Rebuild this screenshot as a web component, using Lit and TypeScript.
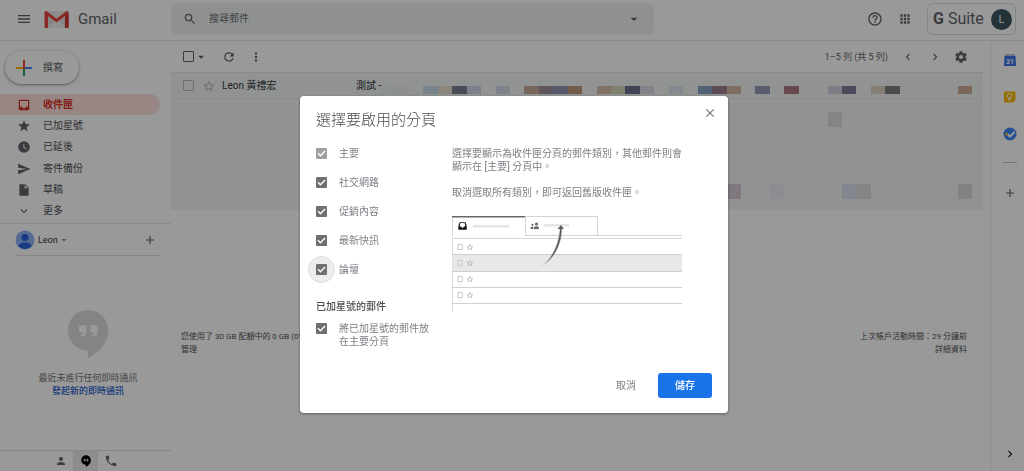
import { LitElement, html, css, svg } from "lit";
import { customElement, property, state } from "lit/decorators.js";
import { classMap } from "lit/directives/class-map.js";
import { styleMap } from "lit/directives/style-map.js";

const ICONS: Record<string, string> = {
  menu: "M3 18h18v-2H3v2zm0-5h18v-2H3v2zm0-7v2h18V6H3z",
  search: "M15.5 14h-.79l-.28-.27A6.47 6.47 0 0 0 16 9.5 6.5 6.5 0 1 0 9.5 16c1.61 0 3.09-.59 4.23-1.57l.27.28v.79l5 4.99L20.49 19l-4.99-5zm-6 0C7.01 14 5 11.99 5 9.5S7.01 5 9.5 5 14 7.01 14 9.5 11.99 14 9.5 14z",
  caret: "M7 10l5 5 5-5z",
  help: "M11 18h2v-2h-2v2zm1-16C6.48 2 2 6.48 2 12s4.48 10 10 10 10-4.48 10-10S17.52 2 12 2zm0 18c-4.41 0-8-3.59-8-8s3.59-8 8-8 8 3.59 8 8-3.59 8-8 8zm0-14c-2.21 0-4 1.79-4 4h2c0-1.1.9-2 2-2s2 .9 2 2c0 2-3 1.75-3 5h2c0-2.25 3-2.5 3-5 0-2.21-1.79-4-4-4z",
  apps: "M4 8h4V4H4v4zm6 12h4v-4h-4v4zm-6 0h4v-4H4v4zm0-6h4v-4H4v4zm6 0h4v-4h-4v4zm6-10v4h4V4h-4zm-6 4h4V4h-4v4zm6 6h4v-4h-4v4zm0 6h4v-4h-4v4z",
  refresh: "M17.65 6.35A7.96 7.96 0 0 0 12 4a8 8 0 1 0 7.73 10h-2.08A6 6 0 1 1 12 6c1.66 0 3.14.69 4.22 1.78L13 11h7V4l-2.35 2.35z",
  more: "M12 8a2 2 0 1 0 0-4 2 2 0 0 0 0 4zm0 2a2 2 0 1 0 0 4 2 2 0 0 0 0-4zm0 6a2 2 0 1 0 0 4 2 2 0 0 0 0-4z",
  left: "M15.41 7.41L14 6l-6 6 6 6 1.41-1.41L10.83 12z",
  right: "M10 6L8.59 7.41 13.17 12l-4.58 4.59L10 18l6-6z",
  down: "M16.59 8.59L12 13.17 7.41 8.59 6 10l6 6 6-6z",
  gear: "M19.43 12.98c.04-.32.07-.64.07-.98s-.03-.66-.07-.98l2.11-1.65c.19-.15.24-.42.12-.64l-2-3.46c-.12-.22-.39-.3-.61-.22l-2.49 1c-.52-.4-1.08-.73-1.69-.98l-.38-2.65A.49.49 0 0 0 14 2h-4c-.25 0-.46.18-.49.42l-.38 2.65c-.61.25-1.17.59-1.69.98l-2.49-1c-.23-.09-.49 0-.61.22l-2 3.46c-.13.22-.07.49.12.64l2.11 1.65c-.04.32-.07.65-.07.98s.03.66.07.98l-2.11 1.65c-.19.15-.24.42-.12.64l2 3.46c.12.22.39.3.61.22l2.49-1c.52.4 1.08.73 1.69.98l.38 2.65c.03.24.24.42.49.42h4c.25 0 .46-.18.49-.42l.38-2.65c.61-.25 1.17-.59 1.69-.98l2.49 1c.23.09.49 0 .61-.22l2-3.46c.12-.22.07-.49-.12-.64l-2.11-1.65zM12 15.5a3.5 3.5 0 1 1 0-7 3.5 3.5 0 0 1 0 7z",
  inbox: "M19 3H5c-1.1 0-2 .9-2 2v14c0 1.1.9 2 2 2h14c1.1 0 2-.9 2-2V5c0-1.1-.9-2-2-2zm0 12h-4c0 1.66-1.35 3-3 3s-3-1.34-3-3H5V5h14v10z",
  tray: "M19 3H5L2 12v9h20v-9L19 3zm0 10h-4c0 1.66-1.35 3-3 3s-3-1.34-3-3H5l2-8h10z",
  star: "M12 17.27L18.18 21l-1.64-7.03L22 9.24l-7.19-.61L12 2 9.19 8.63 2 9.24l5.46 4.73L5.82 21z",
  starOutline: "M22 9.24l-7.19-.62L12 2 9.19 8.63 2 9.24l5.46 4.73L5.82 21 12 17.27 18.18 21l-1.63-7.03L22 9.24zM12 15.4l-3.76 2.27 1-4.28-3.32-2.88 4.38-.38L12 6.1l1.71 4.04 4.38.38-3.32 2.88 1 4.28L12 15.4z",
  clock: "M12 2a10 10 0 1 0 0 20 10 10 0 0 0 0-20zm4.2 14.2L11 13V7h1.5v5.2l4.5 2.7-.8 1.3z",
  send: "M2 21L23 12 2 3v7l15 2-15 2z",
  file: "M4 3.6C4 2.7 4.7 2 5.6 2H14l6 6v12.4c0 .9-.7 1.6-1.6 1.6H5.6c-.9 0-1.6-.7-1.6-1.6V3.6zM13 3.5V9h5.5z",
  plus: "M19 13h-6v6h-2v-6H5v-2h6V5h2v6h6z",
  person: "M12 12a4 4 0 1 0 0-8 4 4 0 0 0 0 8zm0 2c-2.67 0-8 1.34-8 4v2h16v-2c0-2.66-5.33-4-8-4z",
  hangouts: "M12 .5a9.7 9.7 0 0 0 0 19.4v3.600c4.600-2.200 9.700-7 9.700-13.200A9.700 9.700 0 0 0 12 .5zM11.200 11c0 1.400-1 2.300-2.600 2.300v-1.200c.7 0 1-.4 1-1H7.700V7.800h3.500zm5.400 0c0 1.400-1 2.300-2.600 2.300v-1.200c.7 0 1-.4 1-1h-1.900V7.800h3.500z",
  phone: "M6.62 10.79a15.15 15.15 0 0 0 6.59 6.59l2.2-2.2c.27-.27.67-.36 1.02-.24 1.12.37 2.33.57 3.57.57.55 0 1 .45 1 1V20c0 .55-.45 1-1 1A17 17 0 0 1 3 4c0-.55.45-1 1-1h3.500c.55 0 1 .45 1 1 0 1.250.2 2.450.57 3.570.11.35.03.74-.25 1.020l-2.200 2.200z",
  close: "M19 6.41L17.59 5 12 10.59 6.41 5 5 6.41 10.59 12 5 17.59 6.41 19 12 13.41 17.59 19 19 17.59 13.41 12z",
};

const icon = (name: string, extra = "") => html`
  <svg class="icon ${extra}" viewBox="0 0 24 24" aria-hidden="true">
    <path fill-rule="evenodd" d=${ICONS[name]}></path>
  </svg>`;

const FOLDERS = [
  { icon: "inbox", label: "收件匣" },
  { icon: "star", label: "已加星號" },
  { icon: "clock", label: "已延後" },
  { icon: "send", label: "寄件備份" },
  { icon: "file", label: "草稿" },
  { icon: "down", label: "更多" },
];

/* Masked message content: [row, column, colour] on a 41-column grid. */
const MASK: [number, number, string][] = [
  [1, 1, "#eaf0f2"], [1, 2, "#ecefee"], [1, 4, "#c6dbec"], [1, 5, "#e6dfd0"],
  [1, 6, "#79808f"], [1, 7, "#d0d6e4"], [1, 9, "#d2dbe8"], [1, 11, "#c7ab98"],
  [1, 12, "#a08c9c"], [1, 13, "#9096b4"], [1, 14, "#bf9c80"], [1, 16, "#d9bda8"],
  [1, 17, "#d5d6bd"], [1, 18, "#6a7390"], [1, 19, "#d9dae6"], [1, 21, "#dce6ee"],
  [1, 23, "#88a4c4"], [1, 24, "#9c7f8f"], [1, 25, "#d8b8a6"], [1, 27, "#9498b8"],
  [1, 29, "#ac7a80"], [1, 32, "#d0d0e0"], [1, 33, "#837b98"], [1, 35, "#ded2c4"],
  [1, 36, "#7e7e7c"], [1, 41, "#cdab96"],
  [3, 32, "#dadddc"],
  [5, 25, "#d4c8d2"], [5, 28, "#e8ebf0"], [5, 33, "#dae0ee"], [5, 34, "#dadddd"],
  [5, 41, "#dbd8dc"],
];

const base = css`
  :host, * { box-sizing: border-box; }
  button, input { font: inherit; color: inherit; margin: 0; }
  button { border: 0; padding: 0; background: none; display: flex; align-items: center; justify-content: center; cursor: pointer; }
  a { color: inherit; text-decoration: none; }
  .icon { display: block; flex: none; width: 14px; height: 14px; fill: currentColor; }
  .s12 { width: 12px; height: 12px; }
  .s16 { width: 16px; height: 16px; }
  .box {
    appearance: none; flex: none; display: block; width: 11px; height: 11px;
    border: 1px solid currentColor; border-radius: 1px; background: transparent;
  }
`;

@customElement("mail-header")
class MailHeader extends LitElement {
  static styles = [base, css`
    :host { display: flex; align-items: center; height: 41px; padding-bottom: 2px; border-bottom: 1px solid #e6e6e6; color: #5f6368; }
    .brand { flex: none; width: 171px; display: flex; align-items: center; padding-left: 16px; }
    .brand a { display: flex; align-items: center; gap: 9px; margin-left: 12px; font-size: 15px; line-height: 20px; }
    .envelope { width: 25px; height: 19px; display: block; }
    .search { flex: 0 1 483px; height: 32px; display: flex; align-items: center; gap: 12px; padding: 0 12px; border-radius: 6px; background: #eef0f1; }
    .search input { flex: 1; min-width: 0; border: 0; outline: 0; padding: 0; background: none; font-size: 10px; line-height: 16px; }
    .search input::placeholder { color: #6d7175; opacity: 1; }
    .tools { margin-left: auto; display: flex; align-items: center; gap: 15px; padding-right: 8px; }
    .suite { display: flex; align-items: center; justify-content: space-between; width: 89px; height: 32px; padding: 0 3px 0 5px; border: 1px solid #dadce0; border-radius: 6px; font-size: 16px; line-height: 20px; }
    .avatar { width: 21px; height: 21px; border-radius: 50%; background: #3c5561; color: #fff; font-size: 11px; line-height: 21px; text-align: center; }
  `];
  render() {
    return html`
      <div class="brand">
        <button aria-label="主選單">${icon("menu", "s16")}</button>
        <a href="#">
          <svg class="envelope" viewBox="0 0 25 19" aria-hidden="true">
            <path d="M2 1h21v17H2z" fill="#dedede"></path>
            <path d="M3 18L12.500 9 22 18z" fill="#eeeeee"></path>
            <path d="M3 1h19L12.500 9z" fill="#e9e9e9"></path>
            <path d="M.5 2.500C.5 1.500 1.300 1 2.400 1L12.500 8.700 22.600 1c1.100 0 1.900.5 1.900 1.500V17c0 .6-.4 1-1 1H21V6l-8.500 6.500L4 6v12H1.500c-.6 0-1-.4-1-1z" fill="#e8453c"></path>
            <path d="M21 6l3.500-2.600V17c0 .6-.4 1-1 1H21z" fill="#c63a32"></path>
          </svg>
          <span>Gmail</span>
        </a>
      </div>
      <form class="search" role="search">
        ${icon("search")}
        <input type="text" placeholder="搜尋郵件" aria-label="搜尋郵件" />
        <button type="button" aria-label="搜尋選項">${icon("caret", "s16")}</button>
      </form>
      <div class="tools">
        <button aria-label="說明">${icon("help", "s16")}</button>
        <button aria-label="應用程式">${icon("apps")}</button>
        <div class="suite"><span><b>G</b> Suite</span><span class="avatar">L</span></div>
      </div>`;
  }
}

@customElement("mail-sidebar")
class MailSidebar extends LitElement {
  @state() private current = 0;
  static styles = [base, css`
    :host { display: flex; flex-direction: column; width: 171px; flex: none; color: #5f6368; font-size: 10px; line-height: 14px; }
    .compose { align-self: flex-start; gap: 10px; width: 74px; height: 33px; margin: 10px 5px; padding-right: 6px; border-radius: 17px; background: #fff; box-shadow: 0 1px 2px rgba(60,64,67,.4), 0 1px 3px 1px rgba(60,64,67,.15); color: #55585c; }
    .compose svg { width: 18px; height: 18px; }
    nav { display: grid; grid-auto-rows: 1fr; height: 128px; margin-right: 11px; }
    nav a { display: flex; align-items: center; gap: 12px; padding-left: 17px; color: #4c4f53; }
    nav .icon { color: #5f6368; }
    nav .active, nav .active .icon { color: #d93025; }
    nav .active { border-radius: 0 11px 11px 0; background: #fce0dd; font-weight: 700; }
    .me { display: flex; align-items: center; height: 32px; margin-top: 1px; padding: 0 14px 0 15px; border-top: 1px solid #e4e4e4; color: #333; font-size: 9px; }
    .me .face { width: 20px; height: 20px; margin-right: 3px; }
    .me .icon { color: #888; }
    .me .add { margin-left: auto; }
    .me .add .icon { color: #5f6368; }
    .chat { flex: 1; display: flex; flex-direction: column; align-items: center; margin: 0 10px 0 15px; padding: 53px 0 0; border-top: 1px solid #e0e0e0; font-size: 9px; line-height: 13px; color: #757575; }
    .chat .big { width: 50px; height: 50px; color: #dcdcdc; margin-bottom: 13px; }
    .chat a { color: #2a62cc; font-weight: 500; }
    .tabs { display: flex; justify-content: center; height: 21px; border-top: 1px solid #dedede; }
    .tabs button { width: 25px; color: #666; }
    .tabs .on { background: #ececec; color: #000; }
  `];
  render() {
    return html`
      <button class="compose">
        <svg viewBox="0 0 18 18" aria-hidden="true">
          <path d="M8 1h2v8H8z" fill="#ea4335"></path><path d="M1 8h7v2H1z" fill="#fbbc04"></path>
          <path d="M10 8h7v2h-7z" fill="#4285f4"></path><path d="M8 10h2v7H8z" fill="#34a853"></path>
          <path d="M8 8h2v2H8z" fill="#ea4335"></path>
        </svg>
        <span>撰寫</span>
      </button>
      <nav>
        ${FOLDERS.map((f, i) => html`
          <a href="#" class=${classMap({ active: i === this.current })} @click=${() => (this.current = i)}>
            ${icon(f.icon)}<span>${f.label}</span>
          </a>`)}
      </nav>
      <div class="me">
        <svg class="face" viewBox="0 0 20 20" aria-hidden="true">
          <circle cx="10" cy="10" r="9.500" fill="#8fb4f8"></circle>
          <circle cx="10" cy="7.500" r="3.600" fill="#2a62d8"></circle>
          <path d="M3.600 16.500c0-3 3-4 6.400-4s6.400 1 6.400 4a9.500 9.500 0 0 1-12.800 0z" fill="#2a62d8"></path>
        </svg>
        <span>Leon</span>${icon("caret", "s12")}
        <button class="add" aria-label="新增">${icon("plus")}</button>
      </div>
      <div class="chat">
        ${icon("hangouts", "big")}
        <span>最近未進行任何即時通訊</span>
        <a href="#">發起新的即時通訊</a>
      </div>
      <div class="tabs">
        <button aria-label="聯絡人">${icon("person", "s12")}</button>
        <button class="on" aria-label="即時通訊">${icon("hangouts", "s12")}</button>
        <button aria-label="電話">${icon("phone")}</button>
      </div>`;
  }
}

@customElement("mail-list")
class MailList extends LitElement {
  static styles = [base, css`
    :host { display: flex; flex-direction: column; flex: 1; min-width: 0; padding-right: 7px; color: #5f6368; font-size: 10px; line-height: 14px; }
    .bar { display: flex; align-items: center; height: 31px; padding: 0 15px 0 12px; }
    .bar .refresh { margin: 0 13px 0 14px; }
    .pager { margin-left: auto; font-size: 9px; }
    .bar .prev { margin-left: 13px; }
    .bar .next { margin: 0 12px 0 13px; }
    .list { display: grid; grid-template-rows: 138px; background: #f1f5f4; }
    .rows, .mask { grid-area: 1 / 1; }
    .rows { margin: 0; padding: 0; list-style: none; }
    .row { display: flex; align-items: center; height: 27px; padding-left: 12px; border-top: 1px solid #e4e7e6; border-bottom: 1px solid #e8ebea; color: #333538; }
    .row .box, .row button { color: #b4b8b8; }
    .row button { margin: 0 6px 0 8px; }
    .from { width: 134px; }
    .mask { display: grid; grid-template-columns: repeat(41, 1fr); grid-template-rows: 8px 18px 15px 57px 15px; margin: 14px 11px 0 209px; }
    footer { display: flex; justify-content: space-between; padding: 120px 16px 0 10px; font-size: 8px; line-height: 13px; color: #505356; }
    footer div { display: flex; flex-direction: column; align-items: flex-start; }
    footer .activity { align-items: flex-end; }
  `];
  render() {
    return html`
      <div class="bar">
        <input class="box" type="checkbox" aria-label="全選" />
        <button aria-label="選取選項">${icon("caret")}</button>
        <button class="refresh" aria-label="重新整理">${icon("refresh")}</button>
        <button aria-label="更多">${icon("more")}</button>
        <span class="pager">1–5 列 (共 5 列)</span>
        <button class="prev" aria-label="較新">${icon("left")}</button>
        <button class="next" aria-label="較舊">${icon("right")}</button>
        <button aria-label="設定">${icon("gear")}</button>
      </div>
      <div class="list">
        <ul class="rows">
          <li class="row">
            <input class="box" type="checkbox" aria-label="選取" />
            <button aria-label="加上星號">${icon("starOutline")}</button>
            <span class="from">Leon 黃禮宏</span>
            <span>測試 -</span>
          </li>
        </ul>
        <div class="mask">
          ${MASK.map(([r, c, color]) => html`<i style=${styleMap({ gridArea: `${r} / ${c}`, background: color })}></i>`)}
        </div>
      </div>
      <footer>
        <div><span>您使用了 30 GB 配額中的 0 GB (0%)</span><a href="#">管理</a></div>
        <div class="activity"><span>上次帳戶活動時間：29 分鐘前</span><a href="#">詳細資料</a></div>
      </footer>`;
  }
}

@customElement("side-rail")
class SideRail extends LitElement {
  static styles = [base, css`
    :host { display: flex; flex-direction: column; align-items: center; flex: none; width: 34px; padding: 12px 0 10px 4px; border-left: 1px solid #ececec; color: #5f6368; }
    .app { width: 14px; height: 14px; margin-bottom: 23px; }
    .app svg { width: 14px; height: 14px; display: block; }
    .day { font: 700 7px Roboto, sans-serif; fill: #fff; text-anchor: middle; }
    hr { width: 14px; margin: -2px 0 23px; border: 0; border-top: 1px solid #c4c7c5; }
    .fold { margin-top: auto; color: #222; }
  `];
  render() {
    return html`
      <button class="app" aria-label="日曆">
        <svg viewBox="0 0 14 14"><path d="M2 1h10v3H2z" fill="#b8c4dc"></path><path d="M1.500 3h11l.5 10H1z" fill="#3b72e8"></path>
        <text class="day" x="7" y="10.500">31</text></svg>
      </button>
      <button class="app" aria-label="Keep">
        <svg viewBox="0 0 14 14"><path d="M2 1.500h10.500V10L10 12.500H2c-.6 0-1-.4-1-1v-9c0-.6.4-1 1-1z" fill="#fbbc04"></path>
        <circle cx="6.500" cy="5.800" r="2.200" fill="none" stroke="#fff"></circle><path d="M5.500 8h2v2.500h-2z" fill="#fff"></path></svg>
      </button>
      <button class="app" aria-label="Tasks">
        <svg viewBox="0 0 14 14"><circle cx="7" cy="7" r="6.500" fill="#4285f4"></circle>
        <path d="M5 7.500l2 2L11.500 5" fill="none" stroke="#fff" stroke-width="2"></path><circle cx="3.600" cy="7.200" r="1.300" fill="#fbbc04"></circle></svg>
      </button>
      <hr />
      <button aria-label="取得外掛程式">${icon("plus")}</button>
      <button class="fold" aria-label="隱藏側邊面板">${icon("right")}</button>`;
  }
}

@customElement("tabs-dialog")
class TabsDialog extends LitElement {
  @property({ type: Array }) categories = [
    { id: "primary", label: "主要", locked: true },
    { id: "social", label: "社交網路" },
    { id: "promo", label: "促銷內容" },
    { id: "updates", label: "最新快訊" },
    { id: "forums", label: "論壇", focused: true },
  ] as { id: string; label: string; locked?: boolean; focused?: boolean }[];

  static styles = [base, css`
    :host { display: block; }
    .panel { padding: 12px 16px 15px; border-radius: 4px; background: #fff; box-shadow: 0 1px 3px rgba(0,0,0,.4); color: #7b7f84; font-size: 10px; line-height: 13px; }
    header { display: flex; justify-content: space-between; align-items: flex-start; }
    h2 { margin: 2px 0 0; font-size: 15px; line-height: 20px; font-weight: 300; color: #4a4d51; }
    header button { width: 10px; height: 10px; color: #777; margin: 0 -3px; }
    .body { display: flex; gap: 20px; margin-top: 9px; }
    .options { flex: none; width: 116px; }
    label { display: flex; gap: 12px; align-items: center; height: 29px; }
    .tick { appearance: none; display: block; flex: none; width: 11px; height: 11px; border-radius: 1px; background: #6f6f6f; }
    .tick::after {
      content: ""; display: block; width: 11px; height: 11px; background: #fff;
      clip-path: polygon(14% 52%, 23% 43%, 40% 61%, 78% 22%, 87% 32%, 40% 79%);
    }
    .tick:disabled { background: #a0a0a0; }
    .halo { flex: none; display: grid; place-items: center; width: 27px; height: 27px; margin: 0 -8px; border-radius: 50%; }
    .halo.on { background: #ececec; border: 1px solid #dcdcdc; }
    .options .wrapped { align-items: flex-start; height: auto; }
    .wrapped .halo { height: 13px; }
    h3 { margin: 16px 0 9px; font-size: 10px; line-height: 13px; font-weight: 500; color: #4a4d51; }
    .info { flex: 1; min-width: 0; padding-top: 8px; }
    p { margin: 0 0 13px; }
    .art { display: block; width: 230px; height: 98px; margin-top: 17px; }
    .actions { display: flex; justify-content: flex-end; gap: 11px; margin-top: 25px; }
    .actions button { height: 25px; padding: 0 11px; border-radius: 3px; }
    .actions .save { width: 54px; background: #1a73e8; color: #fff; font-weight: 500; }
  `];

  private art() {
    const rows = [30, 46, 62, 78];
    return svg`
      <path d="M.5 1v19M73.500 0v19.500M145.500 1v18.500M73 .5h73" fill="none" stroke="#d4d4d4"></path>
      <path d="M73 19.500h157" stroke="#d4d4d4"></path>
      <path d="M0 .8h73" stroke="#666" stroke-width="1.600"></path>
      <path d="M.5 22v74" stroke="#dcdcdc"></path>
      <path d="M0 22.500h230" stroke="#d8d8d8"></path>
      <path d="M1 39h229v16H1z" fill="#e8e8e8"></path>
      <path d="M0 38.500h230M0 55.500h230M0 71.500h230M0 87.500h230" stroke="#cfcfcf"></path>
      <g transform="translate(5.500 5) scale(.42)"><path d=${ICONS.tray} fill="#111"></path></g>
      <path d="M21 9h36v2.500H21zM92 8h25v2.500H92z" fill="#e6e6e6"></path>
      <g fill="#666"><circle cx="80.500" cy="8.800" r="1.100"></circle><circle cx="84.500" cy="8" r="1.600"></circle>
        <path d="M78.500 13c0-1.800.8-2.500 2.500-2.500V13zM81.500 13c0-2 1-2.800 3-2.800s2.500.8 2.500 2.800z"></path></g>
      ${rows.map((y) => svg`
        <path d=${`M6 ${y - 1.5}h4.500v5H6z`} fill="none" stroke="#cacaca"></path>
        <g transform=${`translate(14 ${y - 3}) scale(.34)`}><path d=${ICONS.starOutline} fill="#a8a8a8"></path></g>`)}
      <defs><linearGradient id="fade" x1="0" y1="1" x2=".5" y2="0">
        <stop offset="0" stop-color="#5c5c5c" stop-opacity="0"></stop><stop offset=".5" stop-color="#5c5c5c"></stop></linearGradient></defs>
      <path d="M89.500 50.500C101 42 107.500 27 108.200 12h1.400C109.600 29 101.500 43 89.500 50.500z" fill="url(#fade)" stroke="url(#fade)" stroke-width=".4"></path>
      <path d="M105.500 13L109 9l3 4z" fill="#5c5c5c"></path>`;
  }

  render() {
    return html`
      <section class="panel" role="dialog" aria-modal="true" aria-labelledby="title">
        <header>
          <h2 id="title">選擇要啟用的分頁</h2>
          <button aria-label="關閉">${icon("close")}</button>
        </header>
        <div class="body">
          <div class="options">
            ${this.categories.map((c) => html`
              <label for=${c.id}>
                <span class=${classMap({ halo: true, on: !!c.focused })}><input class="tick" id=${c.id} type="checkbox" checked ?disabled=${c.locked} /></span>
                <span>${c.label}</span>
              </label>`)}
            <h3>已加星號的郵件</h3>
            <label class="wrapped" for="starred">
              <span class="halo"><input class="tick" id="starred" type="checkbox" checked /></span>
              <span>將已加星號的郵件放在主要分頁</span>
            </label>
          </div>
          <div class="info">
            <p>選擇要顯示為收件匣分頁的郵件類別，其他郵件則會<br />顯示在 [主要] 分頁中。</p>
            <p>取消選取所有類別，即可返回舊版收件匣。</p>
            <svg class="art" viewBox="0 0 230 98" aria-hidden="true">${this.art()}</svg>
          </div>
        </div>
        <div class="actions">
          <button>取消</button>
          <button class="save">儲存</button>
        </div>
      </section>`;
  }
}

@customElement("app-root")
class AppRoot extends LitElement {
  static styles = css`
    :host { display: flex; flex-direction: column; min-height: 100vh; background: #fff; font-family: Roboto, "Noto Sans CJK TC", sans-serif; }
    .page { display: flex; flex: 1; }
    .scrim {
      position: fixed; inset: 0; display: grid; align-items: start; padding-top: 96px; background: rgba(0,0,0,.4);
      grid-template-columns: minmax(16px, 300fr) minmax(0, 428px) minmax(16px, 296fr);
    }
    .scrim tabs-dialog { grid-column: 2; }
  `;
  render() {
    return html`
      <mail-header></mail-header>
      <div class="page">
        <mail-sidebar></mail-sidebar>
        <mail-list></mail-list>
        <side-rail></side-rail>
      </div>
      <div class="scrim"><tabs-dialog></tabs-dialog></div>`;
  }
}
